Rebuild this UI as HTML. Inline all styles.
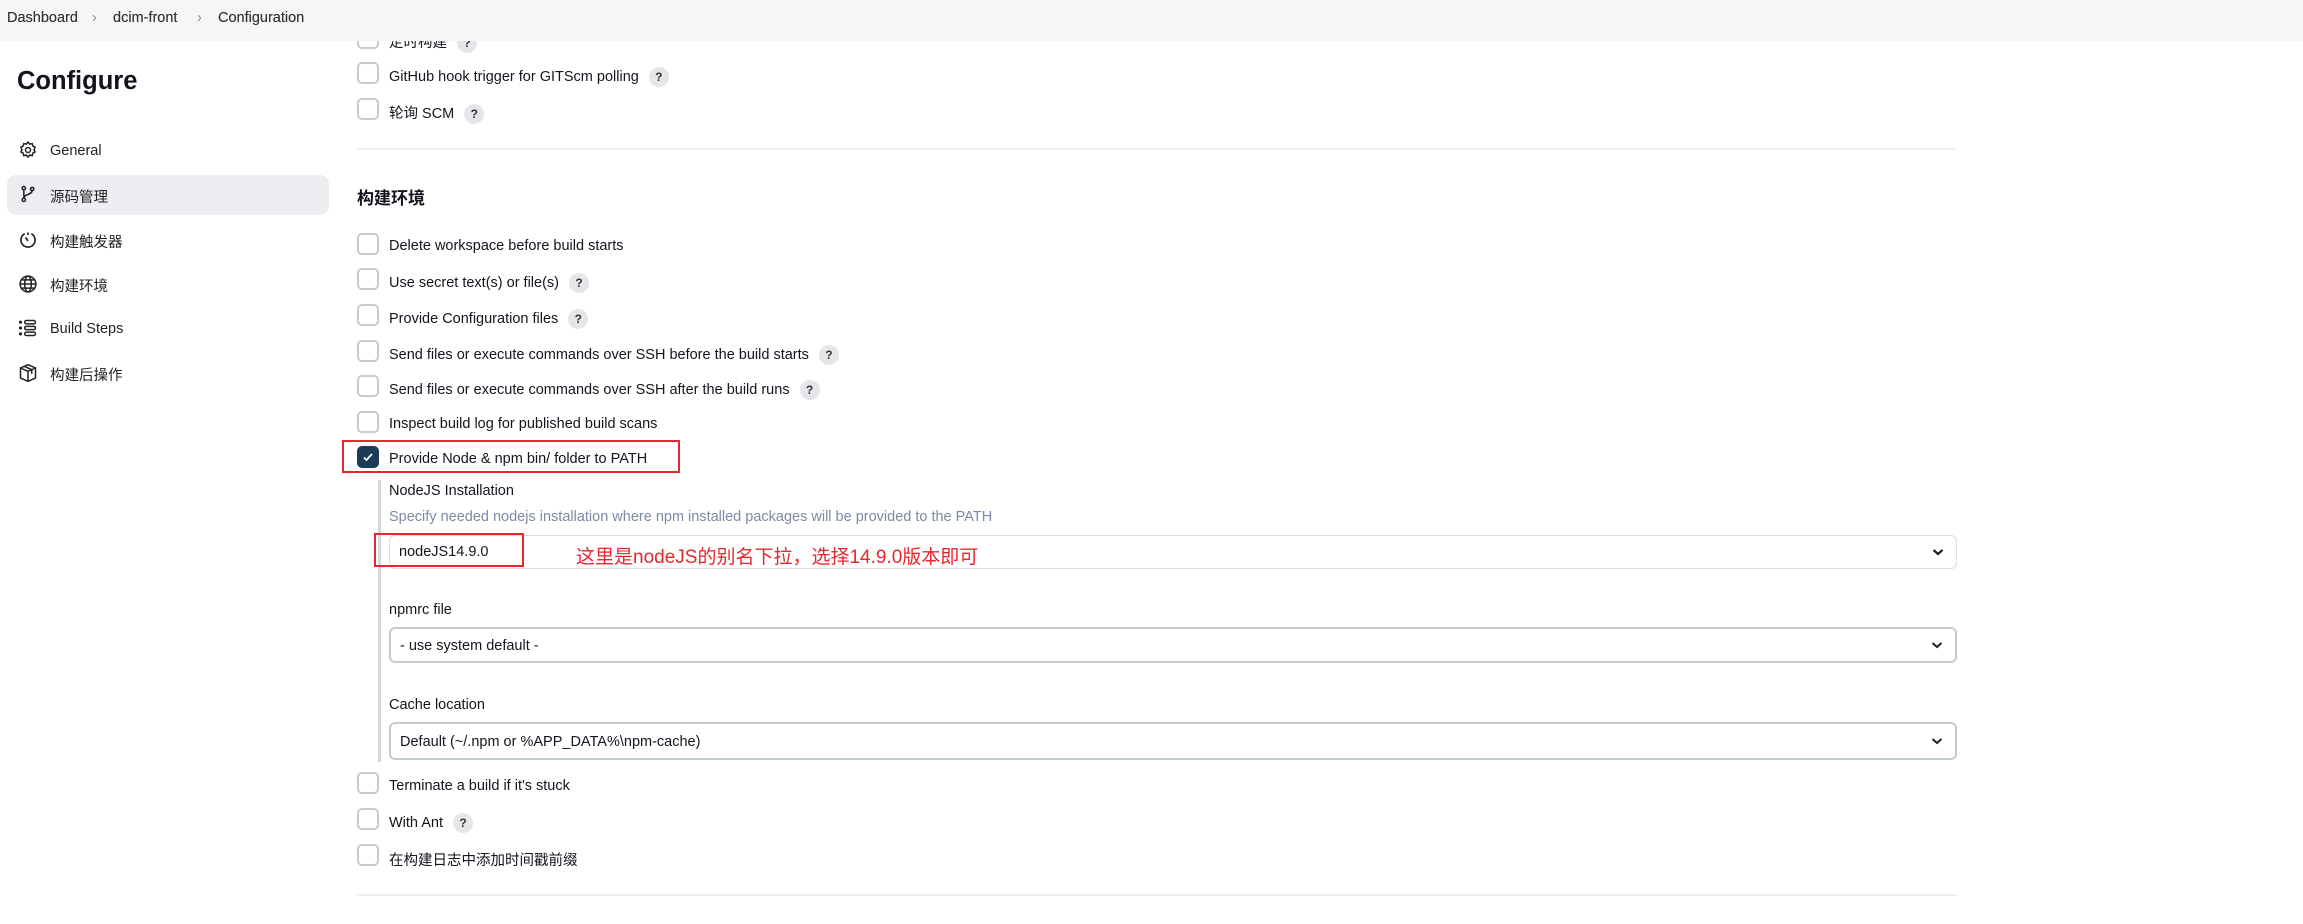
<!DOCTYPE html>
<html><head><meta charset="utf-8"><style>
*{box-sizing:border-box;margin:0;padding:0}
body{width:2303px;height:924px;overflow:hidden;background:#fff;font-family:"Liberation Sans","Noto Sans CJK SC",sans-serif;color:#14141f;position:relative;font-size:14.5px}
.bc{position:absolute;left:0;top:0;width:2303px;height:41px;background:#f6f6f8;}
.bc span{position:absolute;top:10px;font-size:14.5px;color:#333}
.abs{position:absolute;white-space:nowrap}
h1{position:absolute;left:17px;top:67px;font-size:25.5px;font-weight:bold}
.nav{position:absolute;left:50px;font-size:14.5px;color:#222}
.ico{position:absolute;left:18px;width:20px;height:20px}
.hl{position:absolute;left:7px;top:175px;width:322px;height:40px;background:#eeeef2;border-radius:9px}
.cb{position:absolute;left:357px;width:22px;height:22px;border:2px solid #c3ccd1;border-radius:5px;background:#fff}
.lbl{position:absolute;left:389px;white-space:nowrap;font-size:14.5px;margin-top:3px}
.q{display:inline-block;width:20px;height:20px;border-radius:50%;background:#e6e6ea;font-size:12px;font-weight:bold;text-align:center;line-height:20px;margin-left:10px;vertical-align:middle;color:#333}
.sep{position:absolute;left:357px;width:1600px;height:2px;background:#eff0f3}
.sel{position:absolute;left:389px;width:1568px;border:2px solid #c3ccd1;border-radius:6px;background:#fff;font-size:14.5px;padding-left:9px}
.sel svg{position:absolute;right:12px;top:50%;margin-top:-5px}
.red{position:absolute;border:2.5px solid #e8262d}
</style></head><body>
<div class="bc"><span style="left:7px">Dashboard</span><span style="left:92px;color:#999">›</span><span style="left:113px">dcim-front</span><span style="left:197px;color:#999">›</span><span style="left:218px">Configuration</span></div>
<h1>Configure</h1>
<div class="hl"></div>
<svg class="ico" style="top:140px" viewBox="0 0 24 24" fill="none" stroke="#222" stroke-width="1.8"><circle cx="12" cy="12" r="3"/><path d="M12 2.5l2 2.5 3-.8.8 3 2.7 1.5-1.2 2.8 1.2 2.8-2.7 1.5-.8 3-3-.8-2 2.5-2-2.5-3 .8-.8-3-2.7-1.5 1.2-2.8-1.2-2.8 2.7-1.5.8-3 3 .8z"/></svg>
<span class="nav" style="top:143px">General</span>
<svg class="ico" style="top:184px" viewBox="0 0 24 24" fill="none" stroke="#222" stroke-width="1.8"><circle cx="7" cy="5" r="2"/><circle cx="7" cy="19" r="2"/><circle cx="17" cy="6" r="2"/><path d="M7 7v10M17 8c0 5-10 4-10 9"/></svg>
<span class="nav" style="top:186px">源码管理</span>
<svg class="ico" style="top:230px" viewBox="0 0 24 24" fill="none" stroke="#222" stroke-width="2"><path d="M8 4.5A8.5 8.5 0 1 0 16 4.5"/><path d="M12 3v3M12 13l-3-4"/></svg>
<span class="nav" style="top:231px">构建触发器</span>
<svg class="ico" style="top:274px" viewBox="0 0 24 24" fill="none" stroke="#222" stroke-width="1.8"><circle cx="12" cy="12" r="9.5"/><ellipse cx="12" cy="12" rx="4" ry="9.5"/><path d="M2.5 12h19M4 7h16M4 17h16"/></svg>
<span class="nav" style="top:275px">构建环境</span>
<svg class="ico" style="top:318px" viewBox="0 0 24 24" fill="none" stroke="#222" stroke-width="1.8"><circle cx="3" cy="5" r="1"/><circle cx="3" cy="12" r="1"/><circle cx="3" cy="19" r="1"/><rect x="8" y="3" width="13" height="4" rx="2"/><rect x="8" y="10" width="13" height="4" rx="2"/><rect x="8" y="17" width="13" height="4" rx="2"/></svg>
<span class="nav" style="top:321px">Build Steps</span>
<svg class="ico" style="top:363px" viewBox="0 0 24 24" fill="none" stroke="#222" stroke-width="1.8"><path d="M12 2l9 4v12l-9 4-9-4V6z M3 6l9 4 9-4M12 10v12M7.5 4l9 4v5"/></svg>
<span class="nav" style="top:364px">构建后操作</span>

<div class="cb" style="top:27px"></div><span class="lbl" style="top:28px">定时构建<span class="q">?</span></span>
<div style="position:absolute;left:340px;top:0;width:1700px;height:41px;background:#f6f6f8"></div>
<div class="bc" style="background:transparent"><span style="left:7px">Dashboard</span><span style="left:92px;color:#999">›</span><span style="left:113px">dcim-front</span><span style="left:197px;color:#999">›</span><span style="left:218px">Configuration</span></div>
<div class="cb" style="top:62px"></div><span class="lbl" style="top:64px">GitHub hook trigger for GITScm polling<span class="q">?</span></span>
<div class="cb" style="top:98px"></div><span class="lbl" style="top:99px">轮询 SCM<span class="q">?</span></span>
<div class="sep" style="top:148px"></div>
<div class="abs" style="left:357px;top:184px;font-size:17px;font-weight:bold">构建环境</div>
<div class="cb" style="top:233px"></div><span class="lbl" style="top:235px">Delete workspace before build starts</span>
<div class="cb" style="top:268px"></div><span class="lbl" style="top:270px">Use secret text(s) or file(s)<span class="q">?</span></span>
<div class="cb" style="top:304px"></div><span class="lbl" style="top:306px">Provide Configuration files<span class="q">?</span></span>
<div class="cb" style="top:340px"></div><span class="lbl" style="top:342px">Send files or execute commands over SSH before the build starts<span class="q">?</span></span>
<div class="cb" style="top:375px"></div><span class="lbl" style="top:377px">Send files or execute commands over SSH after the build runs<span class="q">?</span></span>
<div class="cb" style="top:411px"></div><span class="lbl" style="top:413px">Inspect build log for published build scans</span>
<div class="cb" style="top:446px;background:#1d3a57;border-color:#1d3a57"><svg width="18" height="18" viewBox="0 0 18 18" style="position:absolute;left:0;top:0"><path d="M5 9.5l2.5 2.5L13 6" fill="none" stroke="#fff" stroke-width="1.8"/></svg></div>
<span class="lbl" style="top:448px">Provide Node &amp; npm bin/ folder to PATH</span>
<div class="red" style="left:342px;top:440px;width:338px;height:33px"></div>
<div style="position:absolute;left:378px;top:480px;width:3px;height:282px;background:#d5d9dd"></div>
<span class="lbl" style="top:480px">NodeJS Installation</span>
<span class="lbl" style="top:506px;color:#7d8aa6">Specify needed nodejs installation where npm installed packages will be provided to the PATH</span>
<div class="sel" style="top:535px;height:34px;line-height:32px;border:1.5px solid #dadde2">nodeJS14.9.0<svg width="12" height="10" viewBox="0 0 12 10"><path d="M1.5 3l4.5 4 4.5-4" fill="none" stroke="#222" stroke-width="2.2"/></svg></div>
<div class="red" style="left:374px;top:533px;width:150px;height:34px"></div>
<div class="abs" style="left:576px;top:542px;font-size:19px;color:#e8262d">这里是nodeJS的别名下拉，选择14.9.0版本即可</div>
<span class="lbl" style="top:599px">npmrc file</span>
<div class="sel" style="top:627px;height:36px;line-height:34px">- use system default -<svg width="12" height="10" viewBox="0 0 12 10"><path d="M1.5 3l4.5 4 4.5-4" fill="none" stroke="#222" stroke-width="2"/></svg></div>
<span class="lbl" style="top:694px">Cache location</span>
<div class="sel" style="top:722px;height:38px;line-height:36px">Default (~/.npm or %APP_DATA%\npm-cache)<svg width="12" height="10" viewBox="0 0 12 10"><path d="M1.5 3l4.5 4 4.5-4" fill="none" stroke="#222" stroke-width="2"/></svg></div>
<div class="cb" style="top:772px"></div><span class="lbl" style="top:775px">Terminate a build if it's stuck</span>
<div class="cb" style="top:808px"></div><span class="lbl" style="top:810px">With Ant<span class="q">?</span></span>
<div class="cb" style="top:844px"></div><span class="lbl" style="top:846px">在构建日志中添加时间戳前缀</span>
<div class="sep" style="top:894px"></div>
</body></html>
